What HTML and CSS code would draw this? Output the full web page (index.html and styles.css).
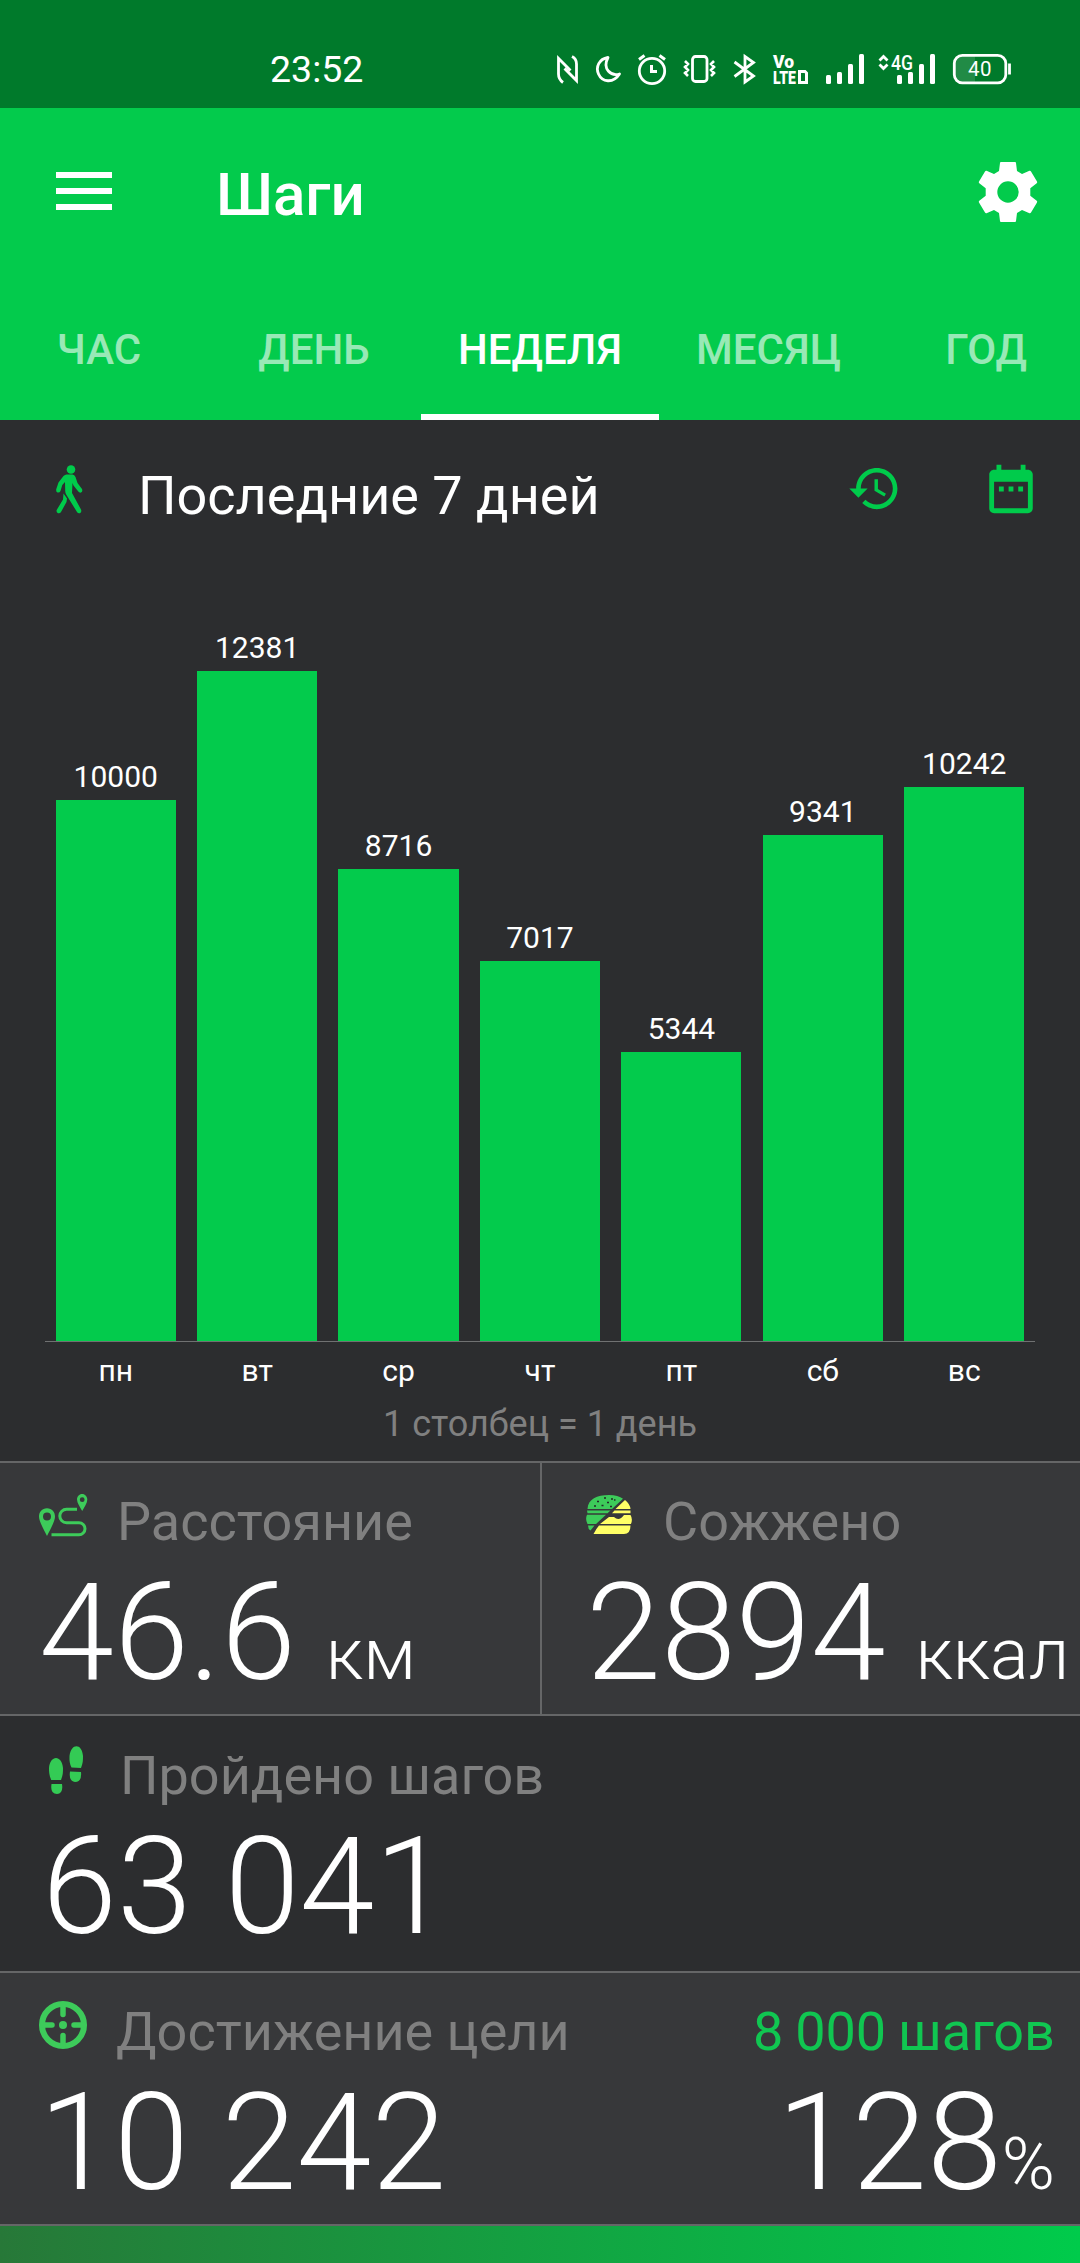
FILE: index.html
```html
<!DOCTYPE html>
<html lang="ru">
<head>
<meta charset="utf-8">
<title>Шаги</title>
<link rel="stylesheet" href="styles.css">
</head>
<body>
<div class="statusbar">
  <span class="clock">23:52</span>
  <svg class="status-icons" width="460" height="40" viewBox="556 50 460 40" fill="none" stroke="#fff" stroke-width="2.8">
    <path d="M563 82.500C559.500 80 558.500 78 558.500 74V58.500L570.500 70.500M572 56.500C575 58 576.500 60.500 576.500 64V80.500L564.500 68.500"/>
    <path d="M608 57.500C599 59 595.500 67 598.500 74C602 82 613 84 619.500 74C611 76.500 602 69 608 57.500Z" stroke-linejoin="round"/>
    <circle cx="652" cy="71" r="12.700"/>
    <path d="M651.500 65V71.500H657M639 59.500L644.500 55.500M665 59.500L659.500 55.500" stroke-width="3"/>
    <rect x="692.500" y="56.500" width="14.500" height="25" rx="3"/>
    <path d="M685 61L688 64L685 67L688 70L685 73L688 76M714 61L711 64L714 67L711 70L714 73L711 76" stroke-width="2.600"/>
    <path d="M734.500 62L753.500 76L745 82V56.500L753.500 62.500L734.500 76.500"/>
    <text class="badge-text" stroke="none" fill="#fff" font-size="18"><tspan x="773" y="68" textLength="21" lengthAdjust="spacingAndGlyphs">Vo</tspan><tspan x="773" y="84" textLength="23" lengthAdjust="spacingAndGlyphs">LTE</tspan></text>
    <path d="M799.500 71.500H805L806.500 73V82.500H799.500Z" stroke-width="3"/>
    <g fill="#fff" stroke="none">
      <rect x="826" y="75" width="5" height="9" rx="1.500"/><rect x="837" y="72" width="5" height="12" rx="1.500"/>
      <rect x="848" y="64" width="5" height="20" rx="1.500"/><rect x="859" y="54" width="5" height="30" rx="1.500"/>
      <rect x="897" y="75" width="5" height="9" rx="1.500"/><rect x="908" y="72" width="5" height="12" rx="1.500"/>
      <rect x="919" y="64" width="5" height="20" rx="1.500"/><rect x="930" y="54" width="5" height="30" rx="1.500"/>
      <text class="net-text" x="891" y="69.500" font-size="19.500" textLength="22" lengthAdjust="spacingAndGlyphs">4G</text>
    </g>
    <path d="M879.500 60.500L883.500 56.500L887.500 60.500M879.500 64.500L883.500 68.500L887.500 64.500"/>
    <path d="M955 61a6 6 0 0 1 5-5H975V82.500H960a6 6 0 0 1-5-5Z" fill="#fff" fill-opacity=".13" stroke="none"/>
    <rect x="954.300" y="55.300" width="51.500" height="27.500" rx="8"/>
    <path d="M1009.500 63.500V74.500" stroke-width="2.800"/>
    <text class="battery-text" x="968" y="76.300" font-size="20.500" textLength="23.500" stroke="none" fill="#fff">40</text>
  </svg>
</div>

<header class="header">
  <div class="toolbar">
    <svg class="menu" width="56" height="38" viewBox="0 0 56 38" fill="#fff"><path d="M0 0H56V6H0zM0 16H56V22H0zM0 32H56V38H0z"/></svg>
    <h1 class="title">Шаги</h1>
    <svg class="gear" width="60" height="60" viewBox="-30 -30 60 60" fill="#fff" fill-rule="evenodd">
      <path d="M-7-30H7Q8-30 8-29L9-21L14-18L21.500-21.200Q22.500-21.500 23-20.500L29-10.500Q29.500-9.500 28.700-8.700L22.300-3.700V3.700L28.700 8.700Q29.500 9.500 29 10.500L23 20.500Q22.500 21.500 21.500 21.200L14 18L9 21L8 29Q8 30 7 30H-7Q-8 30-8 29L-9 21L-14 18L-21.500 21.200Q-22.500 21.500-23 20.500L-29 10.500Q-29.500 9.500-28.700 8.700L-22.300 3.700V-3.700L-28.700-8.700Q-29.500-9.500-29-10.500L-23-20.500Q-22.500-21.500-21.500-21.200L-14-18L-9-21L-8-29Q-8-30-7-30ZM0-10.700A10.700 10.700 0 1 0 0 10.700A10.700 10.700 0 1 0 0-10.700Z"/>
    </svg>
  </div>
  <nav class="tabs">
    <span class="tab tab-hour">ЧАС</span>
    <span class="tab tab-day">ДЕНЬ</span>
    <span class="tab tab-week active">НЕДЕЛЯ</span>
    <span class="tab tab-month">МЕСЯЦ</span>
    <span class="tab tab-year">ГОД</span>
  </nav>
</header>

<main>
  <section class="chart-panel">
    <div class="chart-head">
      <svg class="walk" width="27" height="49" viewBox="0 0 27 49" fill="#00cb4b">
        <circle cx="15" cy="4.500" r="4.300"/>
        <path d="M10.500 9.500H16.500Q18.500 9.800 19.500 12L21.500 18L26 24Q27 26.500 25 27.500Q23.500 28 22.300 26.500L17.500 20.500L16.500 18L16 28L25 44.500Q26 47 24 48.200Q22 48.700 21 47L10.500 30Q9 28 9.200 25L9 17L6.300 20L4.500 26Q3.500 28 1.500 27.500Q-.3 26.500.3 24L2.500 17.500L7.500 11Q9 9.500 10.500 9.500Z"/>
        <path d="M7.500 28.500L11 33.500L10.500 37L5 47Q4 48.700 2 48.200Q0 47 .7 45L7 34.500Z"/>
      </svg>
      <h2 class="chart-title">Последние 7 дней</h2>
      <svg class="history" width="55" height="55" viewBox="0 0 24 24" fill="#00cb4b"><path d="M13 3c-4.970 0-9 4.030-9 9H1l3.890 3.890.07.14L9 12H6c0-3.870 3.130-7 7-7s7 3.130 7 7-3.130 7-7 7c-1.930 0-3.680-.79-4.940-2.060l-1.420 1.420C8.270 19.990 10.510 21 13 21c4.970 0 9-4.030 9-9s-4.030-9-9-9zm-1 5v5l4.280 2.540.72-1.210-3.500-2.080V8H12z"/></svg>
      <svg class="calendar" width="58" height="58" viewBox="0 0 24 24" fill="#00cb4b"><path d="M9 11H7v2h2v-2zm4 0h-2v2h2v-2zm4 0h-2v2h2v-2zm2-7h-1V2h-2v2H8V2H6v2H5c-1.110 0-1.990.9-1.990 2L3 20c0 1.100.89 2 2 2h14c1.100 0 2-.9 2-2V6c0-1.100-.9-2-2-2zm0 16H5V9h14v11z"/></svg>
    </div>
    <div class="bars">
      <div class="col"><span class="value">10000</span><div class="bar" style="height:541.4px"></div></div>
      <div class="col"><span class="value">12381</span><div class="bar" style="height:670.3px"></div></div>
      <div class="col"><span class="value">8716</span><div class="bar" style="height:471.9px"></div></div>
      <div class="col"><span class="value">7017</span><div class="bar" style="height:379.9px"></div></div>
      <div class="col"><span class="value">5344</span><div class="bar" style="height:289.3px"></div></div>
      <div class="col"><span class="value">9341</span><div class="bar" style="height:505.7px"></div></div>
      <div class="col"><span class="value">10242</span><div class="bar" style="height:554.5px"></div></div>
    </div>
    <div class="days"><span>пн</span><span>вт</span><span>ср</span><span>чт</span><span>пт</span><span>сб</span><span>вс</span></div>
    <p class="caption">1 столбец = 1 день</p>
  </section>

  <section class="pair">
    <div class="card distance">
      <div class="label-row">
        <svg class="icon" width="49" height="48" viewBox="0 0 49 48" fill="#3dcb5a" fill-rule="evenodd">
          <path d="M8 14.200C3 14.200 0 18 0 22.500C0 27 4 34 8 42C12 34 16 27 16 22.500C16 18 13 14.200 8 14.200ZM8 18.500A4 4 0 1 1 8 26.500A4 4 0 1 1 8 18.500Z"/>
          <path d="M43.200 0C40 0 38 2.500 38 5.500C38 9 41 13 43.200 17C45.500 13 48.300 9 48.300 5.500C48.300 2.500 46 0 43.200 0ZM43.200 3.300A2.400 2.400 0 1 1 43.200 8.100A2.400 2.400 0 1 1 43.200 3.300Z"/>
          <path d="M38 15.300H27.500A6.700 6.700 0 0 0 27.500 28.700H40A6 6 0 0 1 40 40.700H12.500" fill="none" stroke="#3dcb5a" stroke-width="3"/>
        </svg>
        <span class="label">Расстояние</span>
      </div>
      <div class="big">46.6 <span class="unit">км</span></div>
    </div>
    <div class="card burned">
      <div class="label-row">
        <svg class="icon burger" width="46" height="40" viewBox="0 0 46 40">
          <path fill="#3dcb5a" d="M1.500 14C2 4 11 0 23 0C29 0 34 1.500 37 3.700L26 14ZM1 15.500H24.500L21.500 18.300H1.500ZM1 19.700H20L10 29H1.500Q-1 24 1 19.700ZM2 30.500H8.500L4.500 35.500Q2 34 2 30.500Z"/>
          <path fill="#ffff66" d="M39 5Q44 9 44.500 14H29.500ZM28.500 15.500H44.500V18.300H26ZM23 22H28Q33 27 38 20H44.500Q47 24 45 29H14ZM13 30.500H44.500Q44.500 39 38 39H7.500Q10 34 13 30.500Z"/>
          <path d="M18 3h2M25 4h2M11 6.500h2M21 7.500h2M28 5h1.500M15.500 10.500h2M8 11h2M24 11.500h2" stroke="#252729" stroke-width="1.400"/>
        </svg>
        <span class="label">Сожжено</span>
      </div>
      <div class="big">2894 <span class="unit">ккал</span></div>
    </div>
  </section>

  <section class="card steps">
    <div class="label-row">
      <svg class="icon feet" width="34" height="48" viewBox="0 0 34 48" fill="#34cb55">
        <path d="M2.200 34C0 29 0 25 0 22C1 8.500 13 8.500 14 22C14 26 14 29 12 34ZM2.500 38H13Q14.500 47.500 8 48Q1 48 2.500 38Z"/>
        <path d="M22.500 21.500C20 16 20.500 13 20.500 10C22-3 33-3 34 10C34 14 34 17 32 22ZM21 25.500L32 26Q33 36 26 36Q19.500 35 21 25.500Z"/>
      </svg>
      <span class="label">Пройдено шагов</span>
    </div>
    <div class="big">63 041</div>
  </section>

  <section class="card goal">
    <div class="label-row">
      <svg class="icon" width="48" height="48" viewBox="0 0 48 48" fill="none" stroke="#3dcb5a" stroke-width="6">
        <circle cx="24" cy="24" r="21"/>
        <path d="M24 4V13.500M24 34.500V44M4 24H13M35 24H44" stroke-linecap="round" stroke-width="5.500"/>
        <circle cx="24" cy="24" r="4" fill="#3dcb5a" stroke="none"/>
      </svg>
      <span class="label">Достижение цели</span>
      <span class="target">8 000 шагов</span>
    </div>
    <div class="big split"><span>10 242</span><span class="percent">128<span class="unit">%</span></span></div>
  </section>
  <div class="progress"></div>
</main>
</body>
</html>
```
FILE: styles.css
```css
* { box-sizing: border-box; }
body { margin: 0; width: 1080px; height: 2263px; overflow: hidden; background: #2c2d2f; color: #fff; font-family: Roboto, "Noto Sans", sans-serif; }
svg { display: block; flex: none; }
h1, h2, p { margin: 0; }

.statusbar { display: flex; height: 108px; padding: 50px 64px 0 270px; justify-content: space-between; background: #007a2b; }
.clock { font-size: 37.5px; line-height: 38px; white-space: nowrap; }
.badge-text { font-family: Roboto, sans-serif; font-weight: 900; }
.net-text { font-family: Roboto, sans-serif; font-weight: 500; }
.battery-text { font-family: Roboto, sans-serif; font-weight: 400; }

.header { height: 312px; background: #03cb4c; overflow: hidden; }
.toolbar { display: flex; align-items: center; height: 168px; padding: 0 42px 0 56px; }
.menu { margin-top: -2px; }
.title { flex: 1; margin-left: 104px; padding-top: 5px; font-size: 60px; font-weight: 500; line-height: 70px; }
.tabs { display: flex; height: 144px; margin-left: -9px; }
.tab { display: flex; flex: none; align-items: center; justify-content: center; padding-top: 9px; border-bottom: 6px solid transparent; font-size: 42px; font-weight: 500; color: rgba(255, 255, 255, .6); }
.tab-hour { width: 216px; }
.tab-day { width: 214px; }
.tab-week { width: 238px; }
.tab-month { width: 219px; }
.tab-year { width: 216px; }
.tab.active { color: #fff; border-color: #fff; }

.chart-panel { height: 1041px; }
.chart-head { display: flex; height: 180px; padding: 40px 40px 0 56px; }
.walk { margin-top: 5px; }
.chart-title { flex: 1; margin: 4px 0 0 55px; font-size: 54px; font-weight: 400; line-height: 64px; }
.history { margin-top: 1px; }
.calendar { margin-left: 80px; }
.bars { display: flex; align-items: flex-end; height: 742px; margin: 0 45px; border-bottom: 1px solid #707172; }
.col { display: flex; flex: 1; flex-direction: column; align-items: center; }
.value { margin-bottom: 5px; font-size: 30px; line-height: 36px; }
.bar { width: 120.2px; background: #03cb4c; }
.days { display: flex; margin: 11px 45px 0; font-size: 30px; line-height: 36px; text-align: center; }
.days span { flex: 1; }
.caption { margin-top: 13px; text-align: center; font-size: 36px; line-height: 44px; color: #808080; }

.card { height: 257px; padding: 26px 27px 0 39px; border-top: 2px solid #656667; background: #37383a; white-space: nowrap; }
.pair { display: grid; grid-template-columns: 540px 540px; }
.pair .card { height: 253px; }
.burned { padding-left: 44px; border-left: 2px solid #656667; }
.steps { background: #2c2d2f; }
.goal { height: 253px; padding-right: 25px; }
.label-row { display: flex; height: 69px; }
.icon { margin-top: 5px; }
.label { margin-left: 29px; padding-top: 1px; font-size: 54px; line-height: 64px; color: #808080; }
.burger { margin-top: 6px; }
.burned .label { margin-left: 31px; }
.feet { margin: 4px 0 0 10px; }
.steps .label { margin-left: 37px; padding-top: 2px; }
.steps .big { margin: 1px 0 0 3px; }
.target { margin-left: auto; padding-top: 1px; font-size: 54px; line-height: 64px; word-spacing: -1.5px; color: #10c651; }
.goal .icon { margin-top: 2px; }
.big { font-size: 135px; font-weight: 300; line-height: 150px; }
.unit { margin-left: -3px; font-size: 72px; }
.percent .unit { margin-left: 0; }
.split { display: flex; justify-content: space-between; }
.progress { height: 39px; border-top: 2px solid #656667; background: linear-gradient(90deg, #277838, #00cb4b); }
```
